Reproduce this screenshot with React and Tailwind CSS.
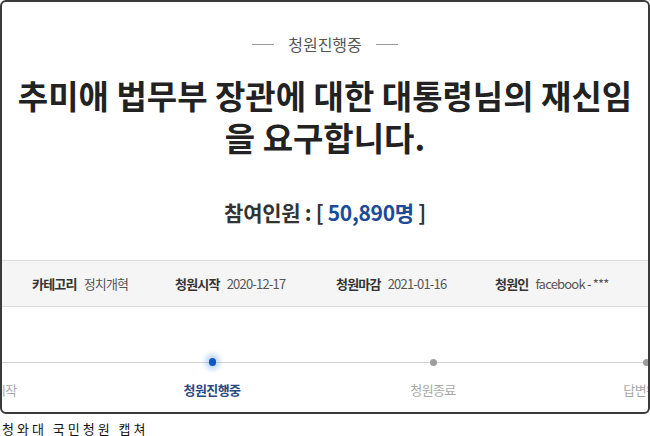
import React from 'react';

const info = [
  { label: '카테고리', value: '정치개혁', w: 'w-[143px]' },
  { label: '청원시작', value: '2020-12-17', w: 'w-[161px]' },
  { label: '청원마감', value: '2021-01-16', w: 'w-[159px]' },
  { label: '청원인', value: 'facebook - ***', w: '' },
];

const steps = [
  { name: '청원시작', w: 'w-[200px]', state: 'done' },
  { name: '청원진행중', w: 'w-[236px]', state: 'active' },
  { name: '청원종료', w: 'w-[206px]', state: 'todo' },
  { name: '답변완료', w: 'w-[220px]', state: 'todo' },
];

export default function App() {
  return (
    <div className="w-[650px] h-[436px] bg-white font-['Noto_Sans_CJK_KR','Noto_Sans',sans-serif] overflow-hidden">
      {/* 캡쳐 프레임 */}
      <div className="w-[650px] h-[414px] border-2 border-[#3a3a3a] rounded-[6px] overflow-hidden">
        {/* 상태 */}
        <div className="pt-[30px] flex items-center justify-center gap-[14px]">
          <span className="w-[22px] h-px bg-[#9a9a9a]"></span>
          <span className="text-[16px] leading-[24px] text-[#555]">청원진행중</span>
          <span className="w-[22px] h-px bg-[#9a9a9a]"></span>
        </div>

        {/* 제목 */}
        <h1 className="mt-[18px] text-center text-[33px] leading-[42px] font-bold text-[#222]">
          추미애 법무부 장관에 대한 대통령님의 재신임
          <br />
          을 요구합니다.
        </h1>

        {/* 참여인원 */}
        <p className="mt-[38px] text-center text-[21px] leading-[32px] font-bold text-[#333] tracking-[-0.3px]">
          참여인원 : [ <span className="text-[#1b4b97]">50,890명</span> ]
        </p>

        {/* 정보 바 */}
        <div className="mt-[32px] h-[47px] bg-[#f5f5f5] border-y border-[#dcdcdc] flex items-center pl-[30px] text-[13px] leading-[20px] tracking-[-0.8px]">
          {info.map(item => (
            <div key={item.label} className={`${item.w} shrink-0 flex items-center gap-[7px]`}>
              <span className="font-bold text-[#333]">{item.label}</span>
              <span className="text-[#555]">{item.value}</span>
            </div>
          ))}
        </div>

        {/* 진행 단계 */}
        <div className="relative mt-[45px]">
          <div className="absolute left-0 right-0 top-[10px] h-px bg-[#d2d2d2]"></div>
          <div className="relative flex ml-[-108px]">
            {steps.map(step => (
              <div key={step.name} className={`${step.w} shrink-0 flex flex-col items-center`}>
                <div className="w-[20px] h-[20px] flex items-center justify-center">
                  {step.state === 'active' ? (
                    <span className="w-[7px] h-[8px] rounded-full bg-[#0b58c4] shadow-[0_0_5px_4px_rgba(80,150,235,0.35)]"></span>
                  ) : (
                    <span className="w-[7px] h-[7px] rounded-full bg-[#9d9d9d]"></span>
                  )}
                </div>
                <span
                  className={
                    step.state === 'active'
                      ? 'mt-[8px] text-[13px] leading-[20px] tracking-[-0.6px] font-bold text-[#2a4a7f]'
                      : 'mt-[8px] text-[13px] leading-[20px] tracking-[-0.6px] text-[#a8a8a8]'
                  }
                >
                  {step.name}
                </span>
              </div>
            ))}
          </div>
        </div>
      </div>

      {/* 출처 */}
      <p className="mt-[5px] pl-[2px] text-[13px] leading-[20px] tracking-[3px] text-[#111]">청와대 국민청원 캡쳐</p>
    </div>
  );
}
